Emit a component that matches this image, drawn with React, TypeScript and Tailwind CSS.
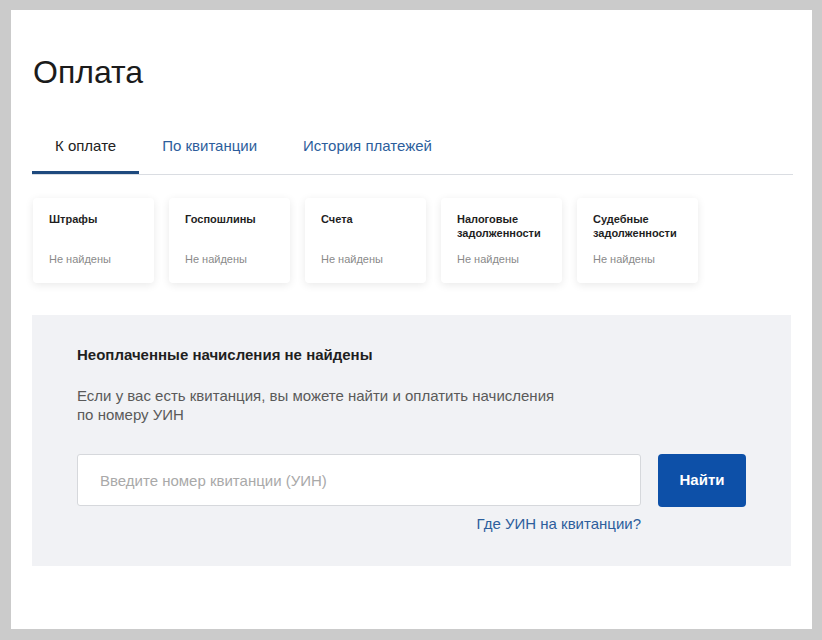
import React from 'react';

const debts = [
  { title: 'Штрафы', status: 'Не найдены' },
  { title: 'Госпошлины', status: 'Не найдены' },
  { title: 'Счета', status: 'Не найдены' },
  { title: 'Налоговые задолженности', status: 'Не найдены' },
  { title: 'Судебные задолженности', status: 'Не найдены' },
];

const tabs = ['К оплате', 'По квитанции', 'История платежей'];

const App: React.FC = () => {
  return (
    <div className="min-h-screen bg-[#cbcbcb] pt-[10px] pl-[11px] pr-[10px] pb-[11px] font-['Liberation_Sans',Arial,sans-serif]">
      <div className="h-[619px] bg-white pt-[46px] pl-[21px] pr-[19px]">
        <h1 className="text-[32px] leading-none font-normal text-[#1b1b1b] pl-[1px]">Оплата</h1>

        {/* Tabs */}
        <div className="mt-[38px] flex border-b border-[#dadde2]">
          {tabs.map((tab, index) => (
            <div
              key={tab}
              className={`px-[23px] pt-[10px] pb-[15px] text-[15px] leading-[20px] border-b-[3px] ${
                index === 0 ? 'border-[#1e4a7e] text-[#222222]' : 'border-transparent text-[#2d5e9c]'
              }`}
            >
              {tab}
            </div>
          ))}
        </div>

        {/* Debt cards */}
        <div className="mt-[23px] flex gap-[15px] pl-[1px]">
          {debts.map((debt) => (
            <div
              key={debt.title}
              className="w-[121px] h-[85px] bg-white rounded-[4px] shadow-[0_2px_8px_rgba(0,0,0,0.09)] pl-[16px] pr-[8px] pt-[14px]"
            >
              <div className="min-h-[28px] text-[11px] leading-[14px] font-bold text-[#1f1f1f]">{debt.title}</div>
              <div className="mt-[12px] text-[11px] leading-[14px] text-[#8a8a8a]">{debt.status}</div>
            </div>
          ))}
        </div>

        {/* Search by UIN */}
        <div className="mt-[32px] mr-[2px] bg-[#f1f2f5] px-[45px] pt-[30px] pb-[32px]">
          <h2 className="text-[15px] leading-[20px] font-bold text-[#1f1f1f]">Неоплаченные начисления не найдены</h2>
          <p className="mt-[21px] max-w-[495px] text-[15px] leading-[19px] text-[#5a5a5a]">
            Если у вас есть квитанция, вы можете найти и оплатить начисления по номеру УИН
          </p>
          <div className="mt-[30px] flex gap-[17px]">
            <div className="flex-1">
              <input
                type="text"
                placeholder="Введите номер квитанции (УИН)"
                className="w-full h-[52px] bg-white border border-[#d6d8dc] rounded-[3px] pl-[22px] text-[15px] text-[#333] placeholder:text-[#a9a9a9] outline-none"
              />
              <div className="mt-[8px] text-right text-[15px] leading-[20px] text-[#2d5e9c]">Где УИН на квитанции?</div>
            </div>
            <button className="w-[88px] h-[53px] rounded-[4px] bg-[#0d50a8] text-white text-[15px] font-bold">
              Найти
            </button>
          </div>
        </div>
      </div>
    </div>
  );
};

export default App;
